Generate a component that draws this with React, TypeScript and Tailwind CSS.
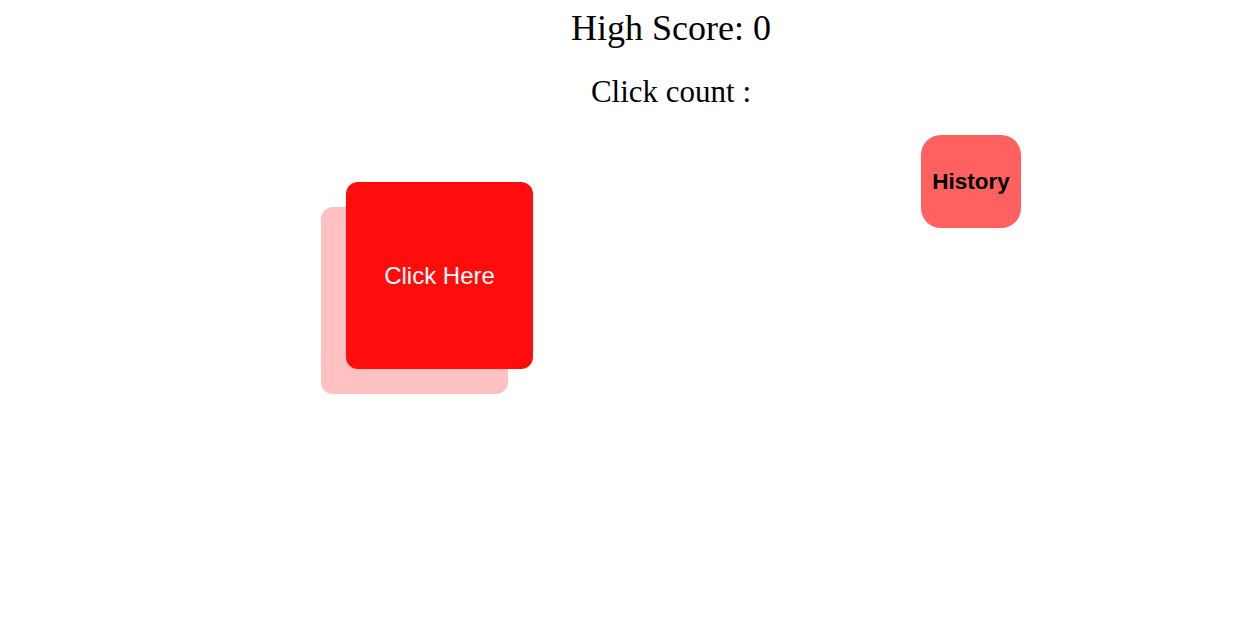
export default function App() {
  return (
    <div className="min-h-[630px] w-full bg-white">
      <div className="flex flex-col items-center pl-[90px] text-black" style={{ fontFamily: '"Liberation Serif", serif' }}>
        <h1 className="mt-[8px] text-[36px] leading-[41px]">High Score: 0</h1>
        <h2 className="mt-[24px] text-[31px] leading-[37px]">Click count :</h2>
      </div>
      <div className="relative flex items-start pl-[346px] pt-[25px]" style={{ fontFamily: '"Liberation Sans", Arial, sans-serif' }}>
        <button className="mt-[47px] flex h-[187px] w-[187px] items-center justify-center rounded-[12px] bg-[#ff0c0c] text-[24px] text-white shadow-[-25px_25px_0_0_#ffc1c1]">
          Click Here
        </button>
        <button className="ml-[388px] flex h-[93px] w-[100px] items-center justify-center rounded-[20px] bg-[#ff6060] text-[22.5px] font-bold text-black">
          History
        </button>
      </div>
    </div>
  );
}
